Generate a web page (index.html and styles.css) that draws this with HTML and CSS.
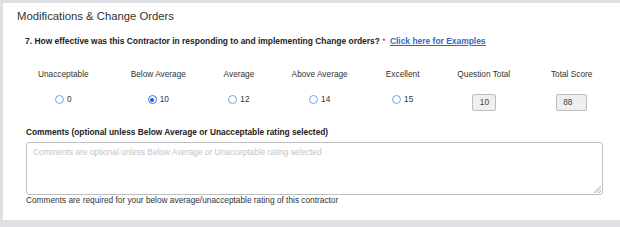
FILE: index.html
```html
<!DOCTYPE html>
<html>
<head>
<meta charset="utf-8">
<link rel="stylesheet" href="styles.css">
</head>
<body>
<div class="panel">
  <div class="title">Modifications &amp; Change Orders</div>
  <div class="question">7. How effective was this Contractor in responding to and implementing Change orders? <span class="req">*</span> <a class="examples" href="#">Click here for Examples</a></div>
  <div class="ratings">
    <div class="cell"><div class="label">Unacceptable</div><div class="opt"><span class="radio"></span><span>0</span></div></div>
    <div class="cell"><div class="label">Below Average</div><div class="opt"><span class="radio checked"></span><span>10</span></div></div>
    <div class="cell"><div class="label">Average</div><div class="opt"><span class="radio"></span><span>12</span></div></div>
    <div class="cell"><div class="label">Above Average</div><div class="opt"><span class="radio"></span><span>14</span></div></div>
    <div class="cell"><div class="label">Excellent</div><div class="opt"><span class="radio"></span><span>15</span></div></div>
    <div class="cell"><div class="label">Question Total</div><div class="box box-q">10</div></div>
    <div class="cell"><div class="label">Total Score</div><div class="box box-t">88</div></div>
  </div>
  <div class="comments-label">Comments (optional unless Below Average or Unacceptable rating selected)</div>
  <div class="textarea">
    <span class="placeholder">Comments are optional unless Below Average or Unacceptable rating selected</span>
    <svg class="grip" width="7" height="7" viewBox="0 0 7 7"><path d="M7 0L0 7M7 2.5L2.5 7M7 5L5 7" stroke="#999" stroke-width="0.8"/></svg>
  </div>
  <div class="help">Comments are required for your below average/unacceptable rating of this contractor</div>
</div>
</body>
</html>
```
FILE: styles.css
```css
html, body {
  margin: 0;
  padding: 0;
}
body {
  background: #dfe0e3;
  font-family: "Liberation Sans", Arial, sans-serif;
  color: #333;
  width: 620px;
  height: 227px;
  overflow: hidden;
}
.panel {
  margin: 3px 0 0 3px;
  height: 217px;
  background: #fff;
  padding-top: 6px;
  box-sizing: border-box;
}
.title {
  font-size: 11.3px;
  line-height: 14px;
  padding-left: 14px;
  color: #333;
}
.question {
  margin-top: 12.5px;
  padding-left: 22px;
  font-size: 8.45px;
  line-height: 11px;
  font-weight: bold;
  color: #222;
}
.req {
  color: #e02020;
  font-weight: normal;
}
.examples {
  color: #3568c4;
  text-decoration: underline;
  margin-left: 2px;
}
.ratings {
  display: grid;
  grid-template-columns: 86.6px 103.4px 58px 103.4px 62.6px 99.6px 76.2px;
  margin-top: 22px;
  padding-left: 17px;
}
.cell {
  display: flex;
  flex-direction: column;
  align-items: center;
}
.label {
  font-size: 8.3px;
  line-height: 11px;
  color: #333;
}
.opt {
  margin-top: 14.5px;
  display: flex;
  align-items: center;
  gap: 3px;
  font-size: 8.3px;
  line-height: 11px;
  color: #333;
  height: 11px;
}
.radio {
  width: 9px;
  height: 9px;
  box-sizing: border-box;
  border: 1px solid #6ea5e6;
  border-radius: 50%;
  background: #fff;
  display: inline-block;
  position: relative;
}
.radio.checked {
  border-color: #2f7be0;
}
.radio.checked::after {
  content: "";
  position: absolute;
  left: 1.5px;
  top: 1.5px;
  width: 4px;
  height: 4px;
  border-radius: 50%;
  background: #1f5fc8;
}
.box {
  margin-top: 14.5px;
  height: 17px;
  box-sizing: border-box;
  background: #efefef;
  border: 1px solid #bdbdbd;
  border-radius: 2px;
  font-size: 8.3px;
  line-height: 15px;
  color: #444;
}
.box-q {
  width: 24px;
  padding-left: 7px;
}
.box-t {
  width: 31px;
  padding-left: 6px;
}
.comments-label {
  margin-top: 15.5px;
  padding-left: 23px;
  font-size: 8.35px;
  line-height: 11px;
  font-weight: bold;
  color: #222;
}
.textarea {
  margin: 4.5px 0 0 23px;
  width: 577px;
  height: 53px;
  box-sizing: border-box;
  border: 1px solid #bfbfbf;
  border-radius: 3px;
  position: relative;
  padding: 4px 6px;
}
.placeholder {
  font-size: 8.3px;
  line-height: 11px;
  color: #c4c4c4;
  display: block;
}
.grip {
  position: absolute;
  right: 1px;
  bottom: 1px;
}
.help {
  padding-left: 23px;
  font-size: 8.3px;
  line-height: 11px;
  color: #333;
}
```
